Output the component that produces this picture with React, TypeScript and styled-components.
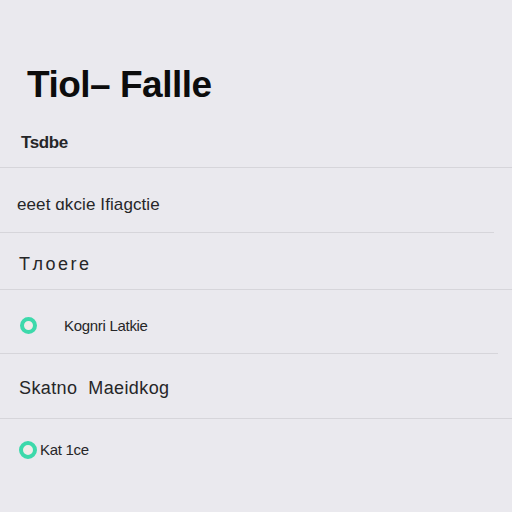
import React from "react";
import styled, { createGlobalStyle } from "styled-components";

const GlobalStyle = createGlobalStyle`
  html, body {
    margin: 0;
    padding: 0;
    background: #eae9ee;
  }
  body {
    font-family: "Liberation Sans", Arial, sans-serif;
    color: #1e1e1e;
  }
`;

const Page = styled.main`
  width: 512px;
  height: 512px;
  overflow: hidden;
  background: #eae9ee;
  display: flex;
  flex-direction: column;
`;

const Header = styled.header`
  height: 111px;
  padding: 0 0 0 27px;
  display: flex;
  align-items: flex-end;
  box-sizing: border-box;
`;

const Title = styled.h1`
  margin: 0 0 8px 0;
  font-size: 37px;
  font-weight: 700;
  letter-spacing: -0.5px;
  color: #0c0c0c;
  line-height: 1;
`;

const List = styled.ul`
  list-style: none;
  margin: 0;
  padding: 0;
`;

const Row = styled.li<{ h: number; indent: number; lineEnd: number; top: number }>`
  height: ${({ h }) => h}px;
  padding-left: ${({ indent }) => indent}px;
  padding-top: ${({ top }) => top}px;
  box-sizing: border-box;
  display: flex;
  align-items: center;
  gap: 8px;
  position: relative;
  &::after {
    content: "";
    position: absolute;
    left: 0;
    right: ${({ lineEnd }) => lineEnd}px;
    bottom: 0;
    height: 1px;
    background: #d6d5da;
  }
`;

const Label = styled.span<{ size?: number; spacing?: number; bold?: boolean }>`
  font-size: ${({ size }) => size ?? 15}px;
  font-weight: ${({ bold }) => (bold ? 700 : 400)};
  color: #262628;
  letter-spacing: ${({ spacing }) => spacing ?? -0.3}px;
  white-space: pre;
`;

const Ring = styled.span<{ size: number }>`
  width: ${({ size }) => size}px;
  height: ${({ size }) => size}px;
  border-radius: 50%;
  border: 4px solid #3dd9ab;
  background: #f1ece9;
  box-sizing: border-box;
  flex-shrink: 0;
`;

const Spacer = styled.span<{ w: number }>`
  width: ${({ w }) => w}px;
  flex-shrink: 0;
`;

export default function App() {
  return (
    <>
      <GlobalStyle />
      <Page>
        <Header>
          <Title>Tiol– Fallle</Title>
        </Header>
        <List>
          <Row h={57} indent={21} lineEnd={0} top={6}>
            <Label bold size={17} spacing={-0.4}>Tsdbe</Label>
          </Row>
          <Row h={65} indent={17} lineEnd={18} top={8}>
            <Label size={17} spacing={0.1}>eeet ɑkcie Ifiagctie</Label>
          </Row>
          <Row h={57} indent={19} lineEnd={0} top={6}>
            <Label size={18} spacing={2.5}>Tлoere</Label>
          </Row>
          <Row h={64} indent={20} lineEnd={14} top={6}>
            <Ring size={17} />
            <Spacer w={11} />
            <Label>Kognri Latkie</Label>
          </Row>
          <Row h={65} indent={19} lineEnd={0} top={4}>
            <Label size={18} spacing={0.4}>Skatno  Maeidkog</Label>
          </Row>
          <Row h={61} indent={19} lineEnd={512} top={0}>
            <Ring size={18} />
            <Label style={{ marginLeft: -5 }}>Kat 1ce</Label>
          </Row>
        </List>
      </Page>
    </>
  );
}
